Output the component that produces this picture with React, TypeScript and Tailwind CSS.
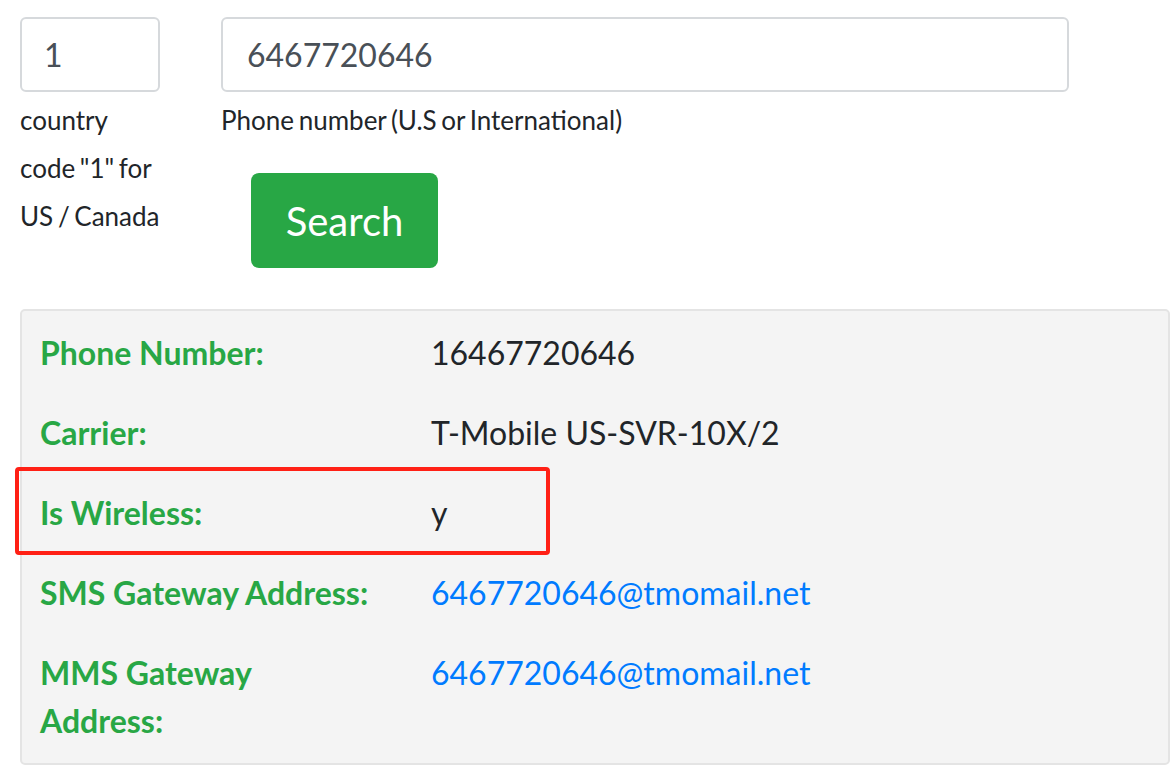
import React from "react";

const ROWS = [
  { label: "Phone Number:", value: "16467720646" },
  { label: "Carrier:", value: "T-Mobile US-SVR-10X/2" },
  { label: "Is Wireless:", value: "y" },
  { label: "SMS Gateway Address:", value: "6467720646@tmomail.net", link: true },
  { label: "MMS Gateway Address:", value: "6467720646@tmomail.net", link: true, wrap: true },
];

const App = () => {
  return (
    <div className="w-[1173px] h-[775px] bg-white overflow-hidden font-['Lato',sans-serif] text-[#212529]">
      <div className="flex pt-[17px] pl-[20px]">
        <div className="w-[140px]">
          <div className="h-[75px] border-2 border-[#d6d9dc] rounded-[6px] flex items-center pl-[22px] text-[32px] text-[#495057]">
            1
          </div>
          <p className="mt-[4px] text-[26px] leading-[48px] whitespace-nowrap [word-spacing:-2px]">
            country
            <br />
            code "1" for
            <br />
            US / Canada
          </p>
        </div>
        <div className="ml-[61px] w-[848px]">
          <div className="h-[75px] border-2 border-[#d6d9dc] rounded-[6px] flex items-center pl-[24px] text-[32px] text-[#495057]">
            6467720646
          </div>
          <p className="mt-[4px] text-[26px] leading-[48px] [word-spacing:-2px]">
            Phone number (U.S or International)
          </p>
          <button className="mt-[29px] ml-[30px] w-[187px] h-[95px] bg-[#28a745] rounded-[8px] text-white text-[40px]">
            Search
          </button>
        </div>
      </div>

      <div className="relative mt-[41px] ml-[20px] w-[1150px] bg-[#f4f4f4] border-2 border-[#e4e4e4] rounded-[5px] py-[2px]">
        {ROWS.map((row) => (
          <div key={row.label} className="grid grid-cols-[409px_1fr] py-[16px] text-[32px] leading-[48px]">
            <div className="pl-[18px] pr-4 font-bold text-[#28a745]">
              {row.wrap ? (
                <>
                  MMS Gateway
                  <br />
                  Address:
                </>
              ) : (
                row.label
              )}
            </div>
            <div className={row.link ? "text-[#007bff]" : "text-[#212529]"}>{row.value}</div>
          </div>
        ))}
        <div className="absolute left-[-7px] top-[156px] w-[535px] h-[88px] border-[4px] border-[#ff2015] rounded-[4px]" />
      </div>
    </div>
  );
};

export default App;
